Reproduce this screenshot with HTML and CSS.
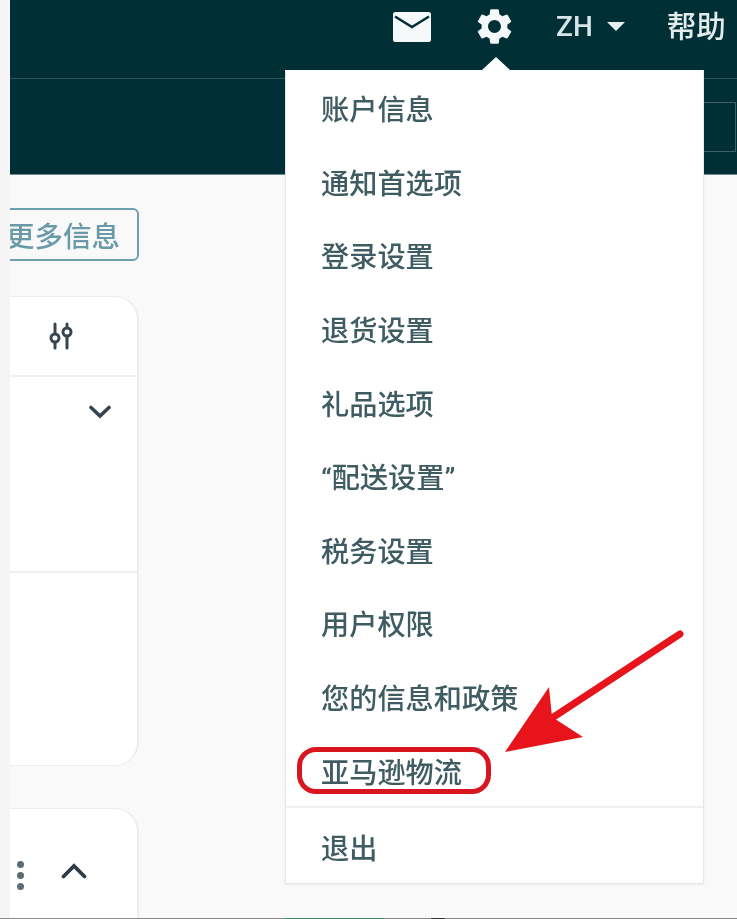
FILE: index.html
```html
<!DOCTYPE html>
<html lang="zh-CN">
<head>
  <meta charset="UTF-8" />
  <meta name="viewport" content="width=device-width, initial-scale=1.0"/>
  <title>设置菜单</title>
  <link rel="stylesheet" href="styles.css">
</head>
<body>
  <div class="screen">
    <div class="gutter"></div>
    <div class="page">
      <header class="header">
        <div class="top-bar">
          <svg class="mail-icon" viewBox="0 0 38 30" aria-label="消息">
            <rect width="38" height="30" rx="2.5" fill="#f6f9f9"/>
            <path d="M2 4.5 19 15 36 4.5" fill="none" stroke="#002f36" stroke-width="2.6"/>
          </svg>
          <svg class="gear-icon" viewBox="0 0 24 24" aria-label="设置">
            <path fill="#f6f9f9" d="M19.14 12.94c.04-.3.06-.61.06-.94 0-.32-.02-.64-.07-.94l2.03-1.58a.49.49 0 0 0 .12-.61l-1.92-3.32a.488.488 0 0 0-.59-.22l-2.39.96c-.5-.38-1.03-.7-1.62-.94l-.36-2.54a.484.484 0 0 0-.48-.41h-3.84c-.24 0-.43.17-.47.41l-.36 2.54c-.59.24-1.13.57-1.62.94l-2.39-.96c-.22-.08-.47 0-.59.22L2.74 8.87c-.12.21-.08.47.12.61l2.03 1.58c-.05.3-.09.63-.09.94s.02.64.07.94l-2.03 1.58a.49.49 0 0 0-.12.61l1.92 3.32c.12.22.37.29.59.22l2.39-.96c.5.38 1.03.7 1.62.94l.36 2.54c.05.24.24.41.48.41h3.84c.24 0 .44-.17.47-.41l.36-2.54c.59-.24 1.13-.56 1.62-.94l2.39.96c.22.08.47 0 .59-.22l1.92-3.32c.12-.22.07-.47-.12-.61l-2.01-1.58zM12 15.6c-1.98 0-3.6-1.62-3.6-3.6s1.62-3.6 3.6-3.6 3.6 1.62 3.6 3.6-1.62 3.6-3.6 3.6z"/>
          </svg>
          <div class="lang">ZH<span class="caret"></span></div>
          <div class="help">帮助</div>
        </div>
        <div class="sub-bar">
          <div class="search-box"></div>
        </div>
      </header>

      <div class="content">
        <div class="more-btn">更多信息</div>

        <div class="card card-main">
          <div class="card-head">
            <svg class="filter-icon" viewBox="0 0 28 28">
              <g fill="none" stroke="#36454f" stroke-width="3" stroke-linecap="round">
                <path d="M8 2v9M8 21v5M20 2v3M20 15v11"/>
                <circle cx="8" cy="16" r="4"/>
                <circle cx="20" cy="10" r="4"/>
              </g>
            </svg>
          </div>
          <div class="card-row">
            <svg class="chevron" viewBox="0 0 22 14">
              <path d="M2 2.5 11 11 20 2.5" fill="none" stroke="#36454f" stroke-width="3.6" stroke-linecap="round"/>
            </svg>
          </div>
          <div class="card-row"></div>
        </div>

        <div class="card card-next">
          <div class="kebab"><span></span><span></span><span></span></div>
          <svg class="chevron" viewBox="0 0 26 16">
            <path d="M2.5 13.5 13 3 23.5 13.5" fill="none" stroke="#2e3d49" stroke-width="3.8" stroke-linecap="round"/>
          </svg>
        </div>
      </div>
    </div>

    <div class="menu" role="menu">
      <div class="menu-item">账户信息</div>
      <div class="menu-item">通知首选项</div>
      <div class="menu-item">登录设置</div>
      <div class="menu-item">退货设置</div>
      <div class="menu-item">礼品选项</div>
      <div class="menu-item">“配送设置”</div>
      <div class="menu-item">税务设置</div>
      <div class="menu-item">用户权限</div>
      <div class="menu-item">您的信息和政策</div>
      <div class="menu-item"><span class="marked">亚马逊物流</span></div>
      <div class="menu-item menu-last">退出</div>
    </div>

    <svg class="arrow" viewBox="0 0 737 919">
      <path d="M680 634 552 718" stroke="#e8141c" stroke-width="7" stroke-linecap="round"/>
      <polygon points="505,752 549,687 552,717 583,737" fill="#e8141c"/>
    </svg>

    <div class="task-strip">
      <span class="seg-gray seg-a"></span>
      <span class="seg-green"></span>
      <span class="seg-gray seg-b"></span>
      <span class="seg-dark"></span>
      <span class="seg-gray seg-c"></span>
    </div>
  </div>
</body>
</html>
```

FILE: styles.css
```css
* {
  box-sizing: border-box;
}

html, body {
  height: 100%;
  margin: 0;
  background: #f9f9f9;
  font-family: Roboto, 'Noto Sans CJK SC', sans-serif;
}

.screen {
  position: relative;
  display: flex;
  width: 737px;
  height: 919px;
  overflow: hidden;
  filter: blur(0.7px);
}

.gutter {
  flex: none;
  width: 10px;
  background: #f5f5f5;
  position: relative;
  z-index: 2;
}

.page {
  flex: 1;
  min-width: 0;
}

/* dark header */
.header {
  background: #002f36;
  height: 175px;
  border-bottom: 1px solid #6d8d93;
}

.top-bar {
  height: 79px;
  display: flex;
  align-items: flex-start;
  padding-left: 383px;
  border-bottom: 1px solid #2b5058;
}

.mail-icon {
  width: 38px;
  height: 30px;
  margin-top: 12px;
}

.gear-icon {
  width: 43px;
  height: 43px;
  margin-top: 5px;
  margin-left: 42px;
}

.lang {
  margin-left: 40px;
  margin-top: 9px;
  display: flex;
  align-items: center;
  font-size: 28px;
  line-height: 36px;
  font-weight: 500;
  color: #d8e5e8;
}

.caret {
  width: 0;
  height: 0;
  margin-left: 14px;
  margin-top: -1px;
  border-left: 9px solid transparent;
  border-right: 9px solid transparent;
  border-top: 9px solid #e6eef0;
}

.help {
  margin-left: 42px;
  margin-top: 7px;
  font-size: 29.5px;
  line-height: 40px;
  font-weight: 500;
  color: #e3ebed;
  white-space: nowrap;
}

.sub-bar {
  display: flex;
  justify-content: flex-end;
  padding-top: 23px;
}

.search-box {
  width: 60px;
  height: 50px;
  border: 1px solid #3d5f66;
  margin-right: 1px;
}

/* page content behind the menu */
.content {
  width: 129px;
}

.more-btn {
  margin-top: 33px;
  margin-left: -20px;
  height: 53px;
  border: 2px solid #6f9fad;
  border-radius: 6px;
  padding-right: 17px;
  display: flex;
  align-items: center;
  justify-content: flex-end;
  font-size: 28.5px;
  font-weight: 500;
  color: #6a9aa8;
}

.card {
  margin-left: -30px;
  background: #fff;
  border: 1px solid #ededed;
  border-right-width: 2px;
  border-radius: 24px;
}

.card-main {
  margin-top: 35px;
  height: 470px;
}

.card-head {
  height: 80px;
  border-bottom: 2px solid #f0f0f0;
  display: flex;
  align-items: center;
  justify-content: flex-end;
  padding-right: 62px;
}

.filter-icon {
  width: 28px;
  height: 28px;
}

.card-row {
  height: 194px;
  padding: 28px 26px 0 0;
  display: flex;
  justify-content: flex-end;
  align-items: flex-start;
}

.card-row + .card-row {
  border-top: 2px solid #f0f0f0;
}

.card-row .chevron {
  width: 22px;
  height: 14px;
}

.card-next {
  margin-top: 42px;
  height: 140px;
  display: flex;
  align-items: flex-start;
  justify-content: flex-end;
  padding: 54px 50px 0 0;
}

.card-next .chevron {
  width: 26px;
  height: 16px;
}

.kebab {
  display: flex;
  flex-direction: column;
  gap: 4px;
  margin-right: 37px;
  margin-top: -2px;
}

.kebab span {
  width: 7px;
  height: 7px;
  border-radius: 50%;
  background: #5d6b75;
}

/* settings dropdown */
.menu {
  position: absolute;
  z-index: 3;
  left: 285px;
  top: 70px;
  width: 419px;
  height: 814px;
  padding-top: 1px;
  background: #fff;
  border: 1px solid #e4e7e8;
  border-top: none;
  box-shadow: 0 1px 2px rgba(0, 0, 0, 0.06);
}

.menu::before {
  content: "";
  position: absolute;
  left: 196px;
  top: -13px;
  border-left: 14px solid transparent;
  border-right: 14px solid transparent;
  border-bottom: 13px solid #fff;
}

.menu-item {
  height: 73.6px;
  padding-left: 35px;
  display: flex;
  align-items: center;
  font-size: 28.2px;
  font-weight: 500;
  color: #3f5c62;
  white-space: nowrap;
}

.menu-last {
  height: 79px;
  margin-top: -1px;
  border-top: 2px solid #eff0f0;
}

.marked {
  position: relative;
}

.marked::after {
  content: "";
  position: absolute;
  left: -24px;
  right: -29px;
  top: -3px;
  bottom: -3px;
  border: 5px solid #d8161f;
  border-radius: 19px;
}

.arrow {
  position: absolute;
  z-index: 4;
  left: 0;
  top: 0;
  width: 737px;
  height: 919px;
  pointer-events: none;
}

.task-strip {
  position: absolute;
  z-index: 5;
  left: 0;
  right: 0;
  bottom: 0;
  height: 1px;
  display: flex;
}

.seg-gray { background: #8a8a8a; }
.seg-a { width: 285px; }
.seg-green { width: 99px; background: #2f8f63; }
.seg-b { width: 47px; }
.seg-dark { width: 14px; background: #333; }
.seg-c { flex: 1; }
```
